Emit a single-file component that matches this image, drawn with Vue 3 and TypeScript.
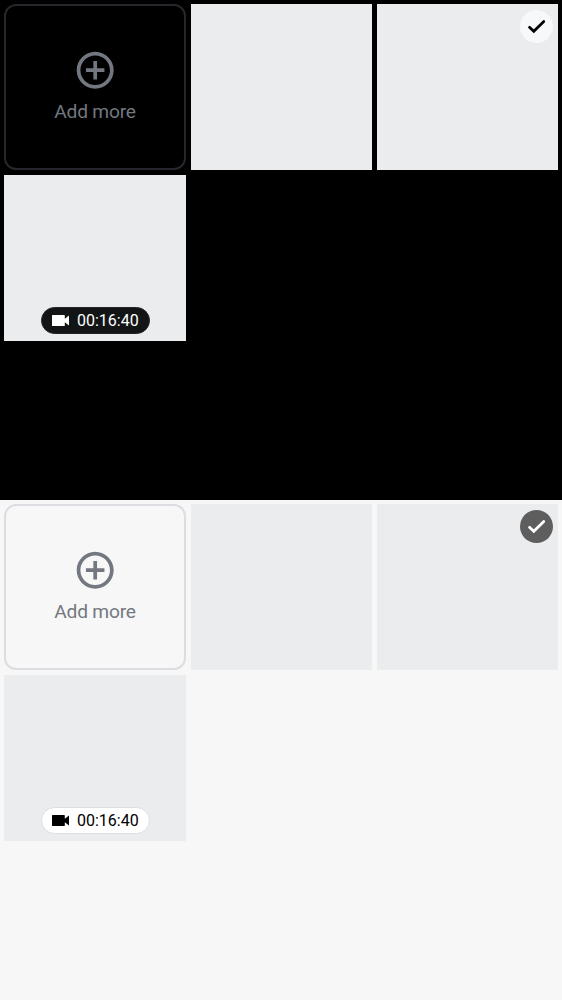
<script setup lang="ts">
interface Theme {
  name: 'dark' | 'light'
}

const themes: Theme[] = [{ name: 'dark' }, { name: 'light' }]
</script>

<template>
  <main class="gallery">
    <section v-for="theme in themes" :key="theme.name" class="panel" :class="theme.name">
      <div class="grid">
        <button class="add" type="button">
          <svg class="plus" viewBox="0 0 24 24" aria-hidden="true">
            <path
              d="M13 7h-2v4H7v2h4v4h2v-4h4v-2h-4V7zm-1-5C6.48 2 2 6.48 2 12s4.48 10 10 10 10-4.48 10-10S17.52 2 12 2zm0 18c-4.41 0-8-3.59-8-8s3.59-8 8-8 8 3.59 8 8-3.59 8-8 8z"
            />
          </svg>
          <span class="label">Add more</span>
        </button>
        <div class="tile"></div>
        <div class="tile">
          <svg class="check" viewBox="0 0 33 33" aria-hidden="true">
            <circle cx="16.5" cy="16.5" r="16.5" />
            <path d="M9.5 17.3l4.3 4L23.8 11.5" />
          </svg>
        </div>
        <div class="tile video">
          <div class="pill">
            <svg class="camera" viewBox="0 0 17 11" aria-hidden="true">
              <path d="M.6 0h11.6q.6 0 .6.6v3.2L17 .6v9.8l-4.2-3.2v3.2q0 .6-.6.6H.6q-.6 0-.6-.6V.6Q0 0 .6 0z" />
            </svg>
            <span class="time">00:16:40</span>
          </div>
        </div>
      </div>
    </section>
  </main>
</template>

<style>
body {
  margin: 0;
}
</style>

<style scoped>
.gallery {
  width: 562px;
  font-family: Roboto, "Liberation Sans", sans-serif;
}
.panel {
  box-sizing: border-box;
  height: 500px;
  padding: 4px;
}
.dark {
  --line: #25272c;
  --badge: #f7f8f9;
  --tick: #000;
  --pill: #121416;
  --pill-line: #22242b;
  --pill-text: #fff;
  background: #000;
}
.light {
  --line: #dcdde2;
  --badge: #5e5e5e;
  --tick: #fff;
  --pill: #fff;
  --pill-line: #dddee4;
  --pill-text: #000;
  background: #f7f7f7;
}
.grid {
  display: grid;
  grid-template-columns: 182px 181px 181px;
  grid-auto-rows: 166px;
  gap: 5px;
}
.add {
  box-sizing: border-box;
  display: flex;
  flex-direction: column;
  align-items: center;
  margin: 0;
  padding: 42px 0 0;
  border: 2px solid var(--line);
  border-radius: 12px;
  background: transparent;
  color: #737780;
  font-family: inherit;
}
.plus {
  width: 44.4px;
  height: 44.4px;
  flex: none;
  fill: currentColor;
}
.label {
  margin-top: 7.6px;
  font-size: 19.2px;
  line-height: 23px;
  letter-spacing: -0.22px;
  white-space: nowrap;
}
.tile {
  position: relative;
  background: #ebecee;
}
.check {
  position: absolute;
  top: 6px;
  right: 5px;
  width: 33px;
  height: 33px;
}
.check circle {
  fill: var(--badge);
}
.check path {
  fill: none;
  stroke: var(--tick);
  stroke-width: 2.7;
  stroke-linecap: round;
}
.video {
  display: flex;
  align-items: flex-end;
  justify-content: center;
}
.pill {
  box-sizing: border-box;
  display: flex;
  align-items: center;
  width: 109px;
  height: 27px;
  margin-bottom: 7px;
  padding-left: 10px;
  border: 1px solid var(--pill-line);
  border-radius: 14px;
  background: var(--pill);
  color: var(--pill-text);
}
.camera {
  width: 17px;
  height: 11px;
  flex: none;
  fill: currentColor;
}
.time {
  margin-left: 8.5px;
  font-size: 16px;
  line-height: 20px;
}
</style>
